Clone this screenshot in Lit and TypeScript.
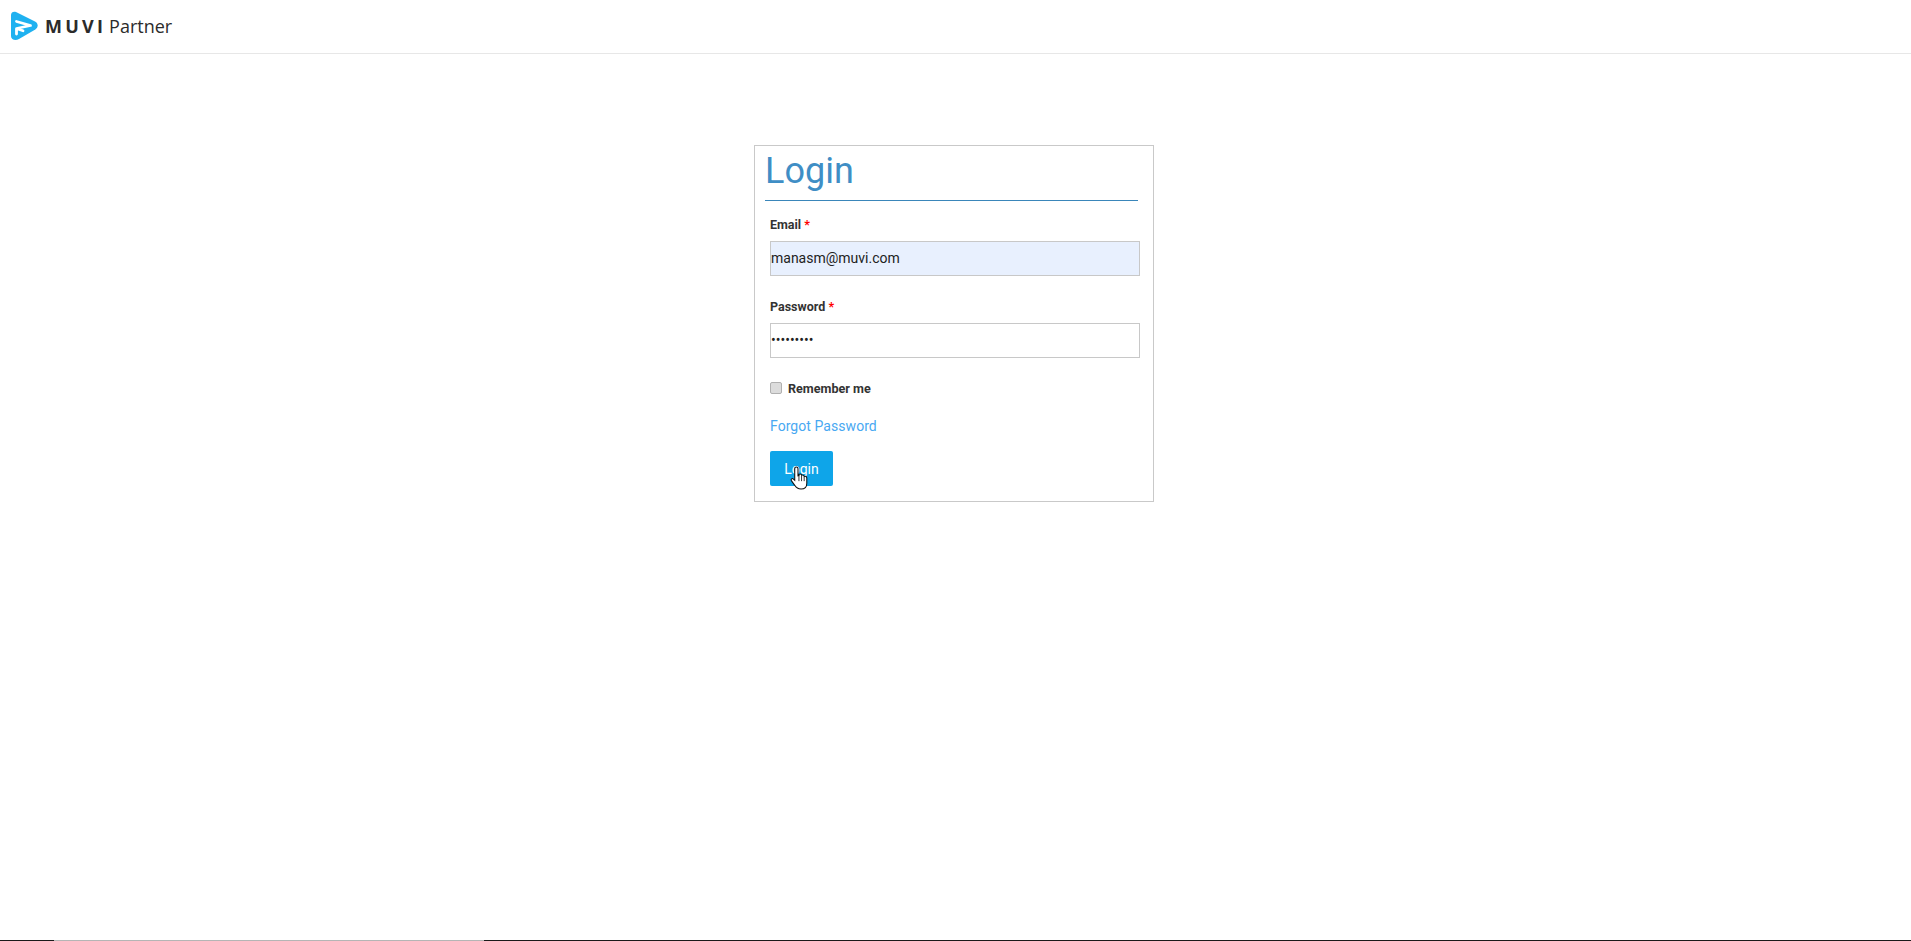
import { LitElement, html, css } from "lit";
import { customElement } from "lit/decorators.js";

@customElement("app-root")
export class AppRoot extends LitElement {
  static styles = css`
    :host { display: block; height: 941px; background: #fff; font-family: Roboto, "Liberation Sans", sans-serif; color: #333; position: relative; overflow: hidden; }
    .top { height: 53px; border-bottom: 1px solid #e7e7e7; display: flex; align-items: center; padding-left: 11px; box-sizing: content-box; }
    .logo { width: 27px; height: 30px; display: block; margin-top: -1px; }
    .muvi { font-family: "Open Sans", sans-serif; font-weight: 700; font-size: 18px; letter-spacing: 3.2px; color: #2b2b2b; margin: -2px 0 0 7px; }
    .partner { font-family: "Open Sans", sans-serif; font-size: 18px; color: #2b2b2b; margin: -2px 0 0 3px; }
    .card { box-sizing: border-box; width: 400px; height: 357px; margin: 91px 0 0 754px; border: 1px solid #c9c9c9; padding: 0 10px; }
    h1 { margin: 0; height: 55px; box-sizing: border-box; border-bottom: 1px solid #3a86ba; font-weight: 400; font-size: 36px; line-height: 51px; color: #3f8ec5; width: 373px; }
    .field { margin-left: 5px; width: 370px; }
    label { display: block; font-size: 12.5px; font-weight: 700; line-height: 14px; color: #333; }
    .star { color: #f00; }
    .email { padding-top: 17px; }
    .pw { padding-top: 24px; }
    input.text { display: block; box-sizing: border-box; width: 370px; height: 35px; margin-top: 9px; border: 1px solid #c8c8c8; padding: 0 0 2px; font: 14px Roboto, sans-serif; color: #222; outline: none; background: #fff; }
    input.filled { background: #e8f0fe; }
    .rem { display: flex; align-items: center; margin: 23px 0 0 5px; height: 14px; font-size: 12.6px; font-weight: 700; }
    .rem input { appearance: none; box-sizing: border-box; width: 12px; height: 12px; margin: 0 6px 0 0; background: #dcdcdc; border: 1px solid #b0b0b0; border-radius: 2px; }
    a { display: block; margin: 23px 0 0 5px; font-size: 14px; letter-spacing: .06px; line-height: 16px; color: #48a8f2; text-decoration: none; }
    button { display: block; margin: 17px 0 0 5px; width: 63px; height: 35px; background: #0ea5e9; border: 0; border-radius: 2px; color: #fff; font: 14px Roboto, sans-serif; padding: 0; }
    .cursor { position: absolute; left: 790px; top: 465px; width: 21px; height: 26px; }
    .base { position: absolute; left: 0; right: 0; top: 940px; height: 1px; background: #1a1a1a; }
    .base i { position: absolute; left: 54px; width: 430px; height: 1px; background: #b5b5b5; display: block; }
  `;

  render() {
    return html`
      <div class="top">
        <svg class="logo" viewBox="0 0 27 30" aria-hidden="true">
          <path d="M0 4C0 1.200 2.600 0 5 1L24 10.500c3.500 1.900 3.500 6 .3 8L8 28c-3.500 2-8 .8-8-3Z" fill="#1fb1f0"/>
          <path d="M5.500 10.500 19.500 14.500 5.500 17.500 12 19.800M5.500 18v5" stroke="#fff" stroke-width="2.800" fill="none" stroke-linecap="round" stroke-linejoin="round"/>
        </svg>
        <span class="muvi">MUVI</span><span class="partner">Partner</span>
      </div>
      <div class="card">
        <h1>Login</h1>
        <div class="field email">
          <label>Email <span class="star">*</span></label>
          <input class="text filled" type="text" value="manasm@muvi.com" />
        </div>
        <div class="field pw">
          <label>Password <span class="star">*</span></label>
          <input class="text" type="password" value="123456789" />
        </div>
        <div class="rem"><input type="checkbox" /><span>Remember me</span></div>
        <a href="#">Forgot Password</a>
        <button>Login</button>
      </div>
      <svg class="cursor" viewBox="0 0 20 24" aria-hidden="true">
        <path d="M6 1.500c1 0 1.600.7 1.600 1.600V10l1-.3V8.600c1.500-.8 2.400 0 2.500.9 1-.6 2.300-.2 2.400 1 1.300-.5 2.500.2 2.500 1.500v5c0 3.500-2 5.500-5.500 5.500-3 0-4.500-1-6-3.500L1.300 14.500c-.8-1.300.8-2.600 2-1.500l1.200 1.200V3.100C4.500 2.200 5 1.500 6 1.500Z" fill="#fff" stroke="#111" stroke-width="1"/>
        <path d="M8.500 10v5M11 10v5M13.500 11v4" stroke="#111" stroke-width=".8"/>
      </svg>
      <div class="base"><i></i></div>
    `;
  }
}
